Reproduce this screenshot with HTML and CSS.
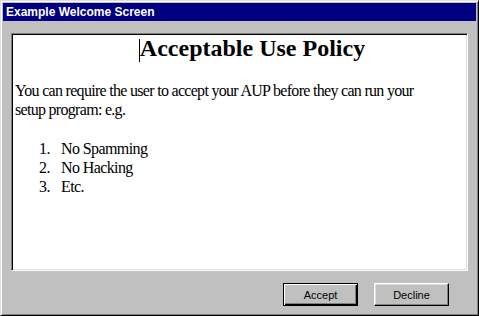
FILE: index.html
```html
<!DOCTYPE html>
<html lang="en">
<head>
    <meta charset="UTF-8">
    <meta name="viewport" content="width=device-width, initial-scale=1.0">
    <title>Example Welcome Screen</title>
    <link rel="stylesheet" href="styles.css">
</head>
<body>
    <div class="window">
        <div class="title-bar">Example Welcome Screen</div>

        <div class="window-body">
            <div class="doc-box">
                <h1 class="doc-title"><span class="caret"></span>Acceptable Use Policy</h1>
                <p class="doc-text">You can require the user to accept your AUP before they can run your setup program: e.g.</p>
                <ol class="doc-list">
                    <li>No Spamming</li>
                    <li>No Hacking</li>
                    <li>Etc.</li>
                </ol>
            </div>

            <div class="button-row">
                <button class="win-btn default">Accept</button>
                <button class="win-btn">Decline</button>
            </div>
        </div>
    </div>
</body>
</html>
```

FILE: styles.css
```css
body {
    margin: 0;
    background-color: #c0c0c0;
}
.window {
    width: 479px;
    height: 316px;
    box-sizing: border-box;
    padding: 2px;
    background-color: #c0c0c0;
    border: 1px solid;
    border-color: #dfdfdf #000000 #000000 #dfdfdf;
    box-shadow: inset 1px 1px #ffffff, inset -1px -1px #808080;
}
.title-bar {
    height: 18px;
    line-height: 18px;
    padding-left: 3px;
    background-color: #000080;
    color: white;
    font-family: 'Liberation Sans', Arial, sans-serif;
    font-size: 12px;
    font-weight: bold;
}
.window-body {
    padding: 12px 8px 0 8px;
}
.doc-box {
    height: 238px;
    box-sizing: border-box;
    padding: 0 2px 0 3px;
    background-color: white;
    border: 1px solid;
    border-color: #808080 #ffffff #ffffff #808080;
    box-shadow: inset 1px 1px #000000, inset -1px -1px #dfdfdf;
    font-family: 'Liberation Serif', 'Times New Roman', serif;
    color: black;
}
.doc-title {
    margin: 1px 0 0 0;
    padding-left: 24px;
    text-align: center;
    font-size: 24px;
    line-height: 27px;
    font-weight: bold;
}
.caret {
    display: inline-block;
    width: 1px;
    height: 23px;
    vertical-align: -6px;
    background-color: black;
}
.doc-text {
    max-width: 415px;
    margin: 19px 0 0 0;
    font-size: 16px;
    line-height: 19px;
    letter-spacing: -0.7px;
}
.doc-list {
    margin: 20px 0 0 0;
    padding: 0;
    list-style: none;
    counter-reset: item;
    font-size: 16px;
    line-height: 19px;
    letter-spacing: -0.6px;
}
.doc-list li {
    counter-increment: item;
}
.doc-list li::before {
    content: counter(item) ".";
    display: inline-block;
    width: 22px;
    margin-left: 24px;
}
.button-row {
    display: flex;
    justify-content: flex-end;
    gap: 16px;
    padding: 12px 19px 0 0;
}
.win-btn {
    width: 75px;
    height: 23px;
    padding: 0;
    background-color: #c0c0c0;
    color: black;
    font-family: 'Liberation Sans', Arial, sans-serif;
    font-size: 11px;
    border: 1px solid;
    border-color: #ffffff #000000 #000000 #ffffff;
    box-shadow: inset -1px -1px #808080, inset 1px 1px #dfdfdf;
    cursor: pointer;
}
.win-btn.default {
    border-color: #000000;
    box-shadow: inset 1px 1px #ffffff, inset -1px -1px #000000, inset -2px -2px #808080;
}
```
